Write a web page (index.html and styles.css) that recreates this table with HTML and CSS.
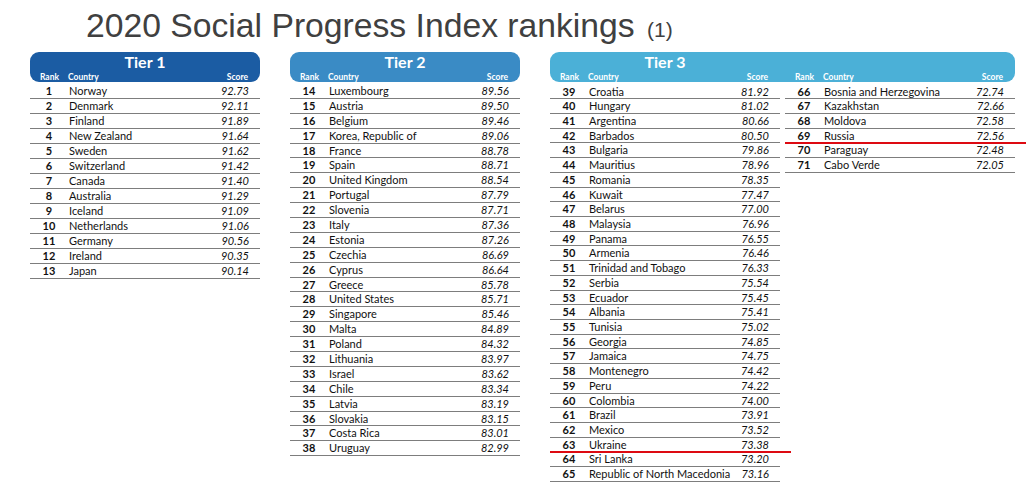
FILE: index.html
```html
<!DOCTYPE html>
<html lang="en">
<head>
<meta charset="utf-8">
<title>2020 Social Progress Index rankings</title>
<link rel="stylesheet" href="styles.css">
</head>
<body>
<h1 class="title">2020 Social Progress Index rankings <span class="note">(1)</span></h1>
<main class="tiers">
  <section class="tier tier1">
    <header class="tier-head">
      <div class="tier-name">Tier 1</div>
      <div class="labels"><span>Rank</span><span>Country</span><span class="r">Score</span></div>
    </header>
    <div class="rows">
      <div class="row"><b>1</b><span>Norway</span><i>92.73</i></div>
      <div class="row"><b>2</b><span>Denmark</span><i>92.11</i></div>
      <div class="row"><b>3</b><span>Finland</span><i>91.89</i></div>
      <div class="row"><b>4</b><span>New Zealand</span><i>91.64</i></div>
      <div class="row"><b>5</b><span>Sweden</span><i>91.62</i></div>
      <div class="row"><b>6</b><span>Switzerland</span><i>91.42</i></div>
      <div class="row"><b>7</b><span>Canada</span><i>91.40</i></div>
      <div class="row"><b>8</b><span>Australia</span><i>91.29</i></div>
      <div class="row"><b>9</b><span>Iceland</span><i>91.09</i></div>
      <div class="row"><b>10</b><span>Netherlands</span><i>91.06</i></div>
      <div class="row"><b>11</b><span>Germany</span><i>90.56</i></div>
      <div class="row"><b>12</b><span>Ireland</span><i>90.35</i></div>
      <div class="row"><b>13</b><span>Japan</span><i>90.14</i></div>
    </div>
  </section>

  <section class="tier tier2">
    <header class="tier-head">
      <div class="tier-name">Tier 2</div>
      <div class="labels"><span>Rank</span><span>Country</span><span class="r">Score</span></div>
    </header>
    <div class="rows">
      <div class="row"><b>14</b><span>Luxembourg</span><i>89.56</i></div>
      <div class="row"><b>15</b><span>Austria</span><i>89.50</i></div>
      <div class="row"><b>16</b><span>Belgium</span><i>89.46</i></div>
      <div class="row"><b>17</b><span>Korea, Republic of</span><i>89.06</i></div>
      <div class="row"><b>18</b><span>France</span><i>88.78</i></div>
      <div class="row"><b>19</b><span>Spain</span><i>88.71</i></div>
      <div class="row"><b>20</b><span>United Kingdom</span><i>88.54</i></div>
      <div class="row"><b>21</b><span>Portugal</span><i>87.79</i></div>
      <div class="row"><b>22</b><span>Slovenia</span><i>87.71</i></div>
      <div class="row"><b>23</b><span>Italy</span><i>87.36</i></div>
      <div class="row"><b>24</b><span>Estonia</span><i>87.26</i></div>
      <div class="row"><b>25</b><span>Czechia</span><i>86.69</i></div>
      <div class="row"><b>26</b><span>Cyprus</span><i>86.64</i></div>
      <div class="row"><b>27</b><span>Greece</span><i>85.78</i></div>
      <div class="row"><b>28</b><span>United States</span><i>85.71</i></div>
      <div class="row"><b>29</b><span>Singapore</span><i>85.46</i></div>
      <div class="row"><b>30</b><span>Malta</span><i>84.89</i></div>
      <div class="row"><b>31</b><span>Poland</span><i>84.32</i></div>
      <div class="row"><b>32</b><span>Lithuania</span><i>83.97</i></div>
      <div class="row"><b>33</b><span>Israel</span><i>83.62</i></div>
      <div class="row"><b>34</b><span>Chile</span><i>83.34</i></div>
      <div class="row"><b>35</b><span>Latvia</span><i>83.19</i></div>
      <div class="row"><b>36</b><span>Slovakia</span><i>83.15</i></div>
      <div class="row"><b>37</b><span>Costa Rica</span><i>83.01</i></div>
      <div class="row"><b>38</b><span>Uruguay</span><i>82.99</i></div>
    </div>
  </section>

  <section class="tier tier3">
    <header class="tier-head">
      <div class="split"><div class="tier-name">Tier 3</div><div></div></div>
      <div class="split">
        <div class="labels"><span>Rank</span><span>Country</span><span class="r">Score</span></div>
        <div class="labels"><span>Rank</span><span>Country</span><span class="r">Score</span></div>
      </div>
    </header>
    <div class="split">
      <div class="rows">
        <div class="row"><b>39</b><span>Croatia</span><i>81.92</i></div>
        <div class="row"><b>40</b><span>Hungary</span><i>81.02</i></div>
        <div class="row"><b>41</b><span>Argentina</span><i>80.66</i></div>
        <div class="row"><b>42</b><span>Barbados</span><i>80.50</i></div>
        <div class="row"><b>43</b><span>Bulgaria</span><i>79.86</i></div>
        <div class="row"><b>44</b><span>Mauritius</span><i>78.96</i></div>
        <div class="row"><b>45</b><span>Romania</span><i>78.35</i></div>
        <div class="row"><b>46</b><span>Kuwait</span><i>77.47</i></div>
        <div class="row"><b>47</b><span>Belarus</span><i>77.00</i></div>
        <div class="row"><b>48</b><span>Malaysia</span><i>76.96</i></div>
        <div class="row"><b>49</b><span>Panama</span><i>76.55</i></div>
        <div class="row"><b>50</b><span>Armenia</span><i>76.46</i></div>
        <div class="row"><b>51</b><span>Trinidad and Tobago</span><i>76.33</i></div>
        <div class="row"><b>52</b><span>Serbia</span><i>75.54</i></div>
        <div class="row"><b>53</b><span>Ecuador</span><i>75.45</i></div>
        <div class="row"><b>54</b><span>Albania</span><i>75.41</i></div>
        <div class="row"><b>55</b><span>Tunisia</span><i>75.02</i></div>
        <div class="row"><b>56</b><span>Georgia</span><i>74.85</i></div>
        <div class="row"><b>57</b><span>Jamaica</span><i>74.75</i></div>
        <div class="row"><b>58</b><span>Montenegro</span><i>74.42</i></div>
        <div class="row"><b>59</b><span>Peru</span><i>74.22</i></div>
        <div class="row"><b>60</b><span>Colombia</span><i>74.00</i></div>
        <div class="row"><b>61</b><span>Brazil</span><i>73.91</i></div>
        <div class="row"><b>62</b><span>Mexico</span><i>73.52</i></div>
        <div class="row mark"><b>63</b><span>Ukraine</span><i>73.38</i></div>
        <div class="row"><b>64</b><span>Sri Lanka</span><i>73.20</i></div>
        <div class="row"><b>65</b><span>Republic of North Macedonia</span><i>73.16</i></div>
      </div>
      <div class="rows">
        <div class="row"><b>66</b><span>Bosnia and Herzegovina</span><i>72.74</i></div>
        <div class="row"><b>67</b><span>Kazakhstan</span><i>72.66</i></div>
        <div class="row"><b>68</b><span>Moldova</span><i>72.58</i></div>
        <div class="row mark"><b>69</b><span>Russia</span><i>72.56</i></div>
        <div class="row"><b>70</b><span>Paraguay</span><i>72.48</i></div>
        <div class="row"><b>71</b><span>Cabo Verde</span><i>72.05</i></div>
      </div>
    </div>
  </section>
</main>
</body>
</html>
```

FILE: styles.css
```css
* { box-sizing: border-box; }

html, body {
  margin: 0;
  padding: 0;
  background: #ffffff;
}

body {
  width: 1026px;
  height: 495px;
  overflow: hidden;
  font-family: "Lato", "Liberation Sans", sans-serif;
  color: #111111;
}

.title {
  margin: 0;
  height: 52px;
  padding: 7px 0 0 86px;
  font-family: "Liberation Sans", Arial, sans-serif;
  font-weight: normal;
  font-size: 33.7px;
  line-height: 37px;
  color: #404040;
  white-space: nowrap;
}

.title .note {
  font-size: 21px;
  margin-left: 3px;
}

.tiers {
  display: flex;
  gap: 30px;
  padding-left: 30px;
  align-items: flex-start;
}

.tier1, .tier2 { width: 230px; }
.tier3 { width: 465px; }

.tier-head {
  height: 30px;
  border-radius: 9px;
  padding-top: 1px;
  color: #ffffff;
}

.tier1 .tier-head { background: #1b5ca3; }
.tier2 .tier-head { background: #3a8bc5; }
.tier3 .tier-head { background: #4bb0d7; }

.tier-name {
  text-align: center;
  font-weight: bold;
  font-size: 16px;
  line-height: 18px;
}

.split {
  display: grid;
  grid-template-columns: 230px 230px;
  column-gap: 5px;
}

.labels,
.row {
  display: grid;
  grid-template-columns: 38px 1fr auto;
  padding-right: 11px;
  align-items: center;
}

.labels {
  font-weight: bold;
  font-size: 8.5px;
  line-height: 10px;
  margin-top: 1px;
}

.labels span:first-child { text-align: center; padding-left: 1px; }
.labels .r { padding-right: 1px; }

.rows {
  margin-top: 2px;
}

.tier3 .rows { margin-top: 2.5px; }

.row {
  position: relative;
  height: 15px;
  border-bottom: 1px solid #7d7d7d;
  font-size: 11px;
  line-height: 14px;
  white-space: nowrap;
}

.row span { padding-left: 1px; }

.tier2 .row { height: 14.9px; }
.tier3 .row { height: 14.73px; }

.row b {
  text-align: center;
  font-weight: bold;
}

.row i {
  font-style: italic;
}

.row.mark::after {
  content: "";
  position: absolute;
  left: 0;
  right: -11px;
  bottom: -1.5px;
  height: 2px;
  background: #dd0a12;
}
```
